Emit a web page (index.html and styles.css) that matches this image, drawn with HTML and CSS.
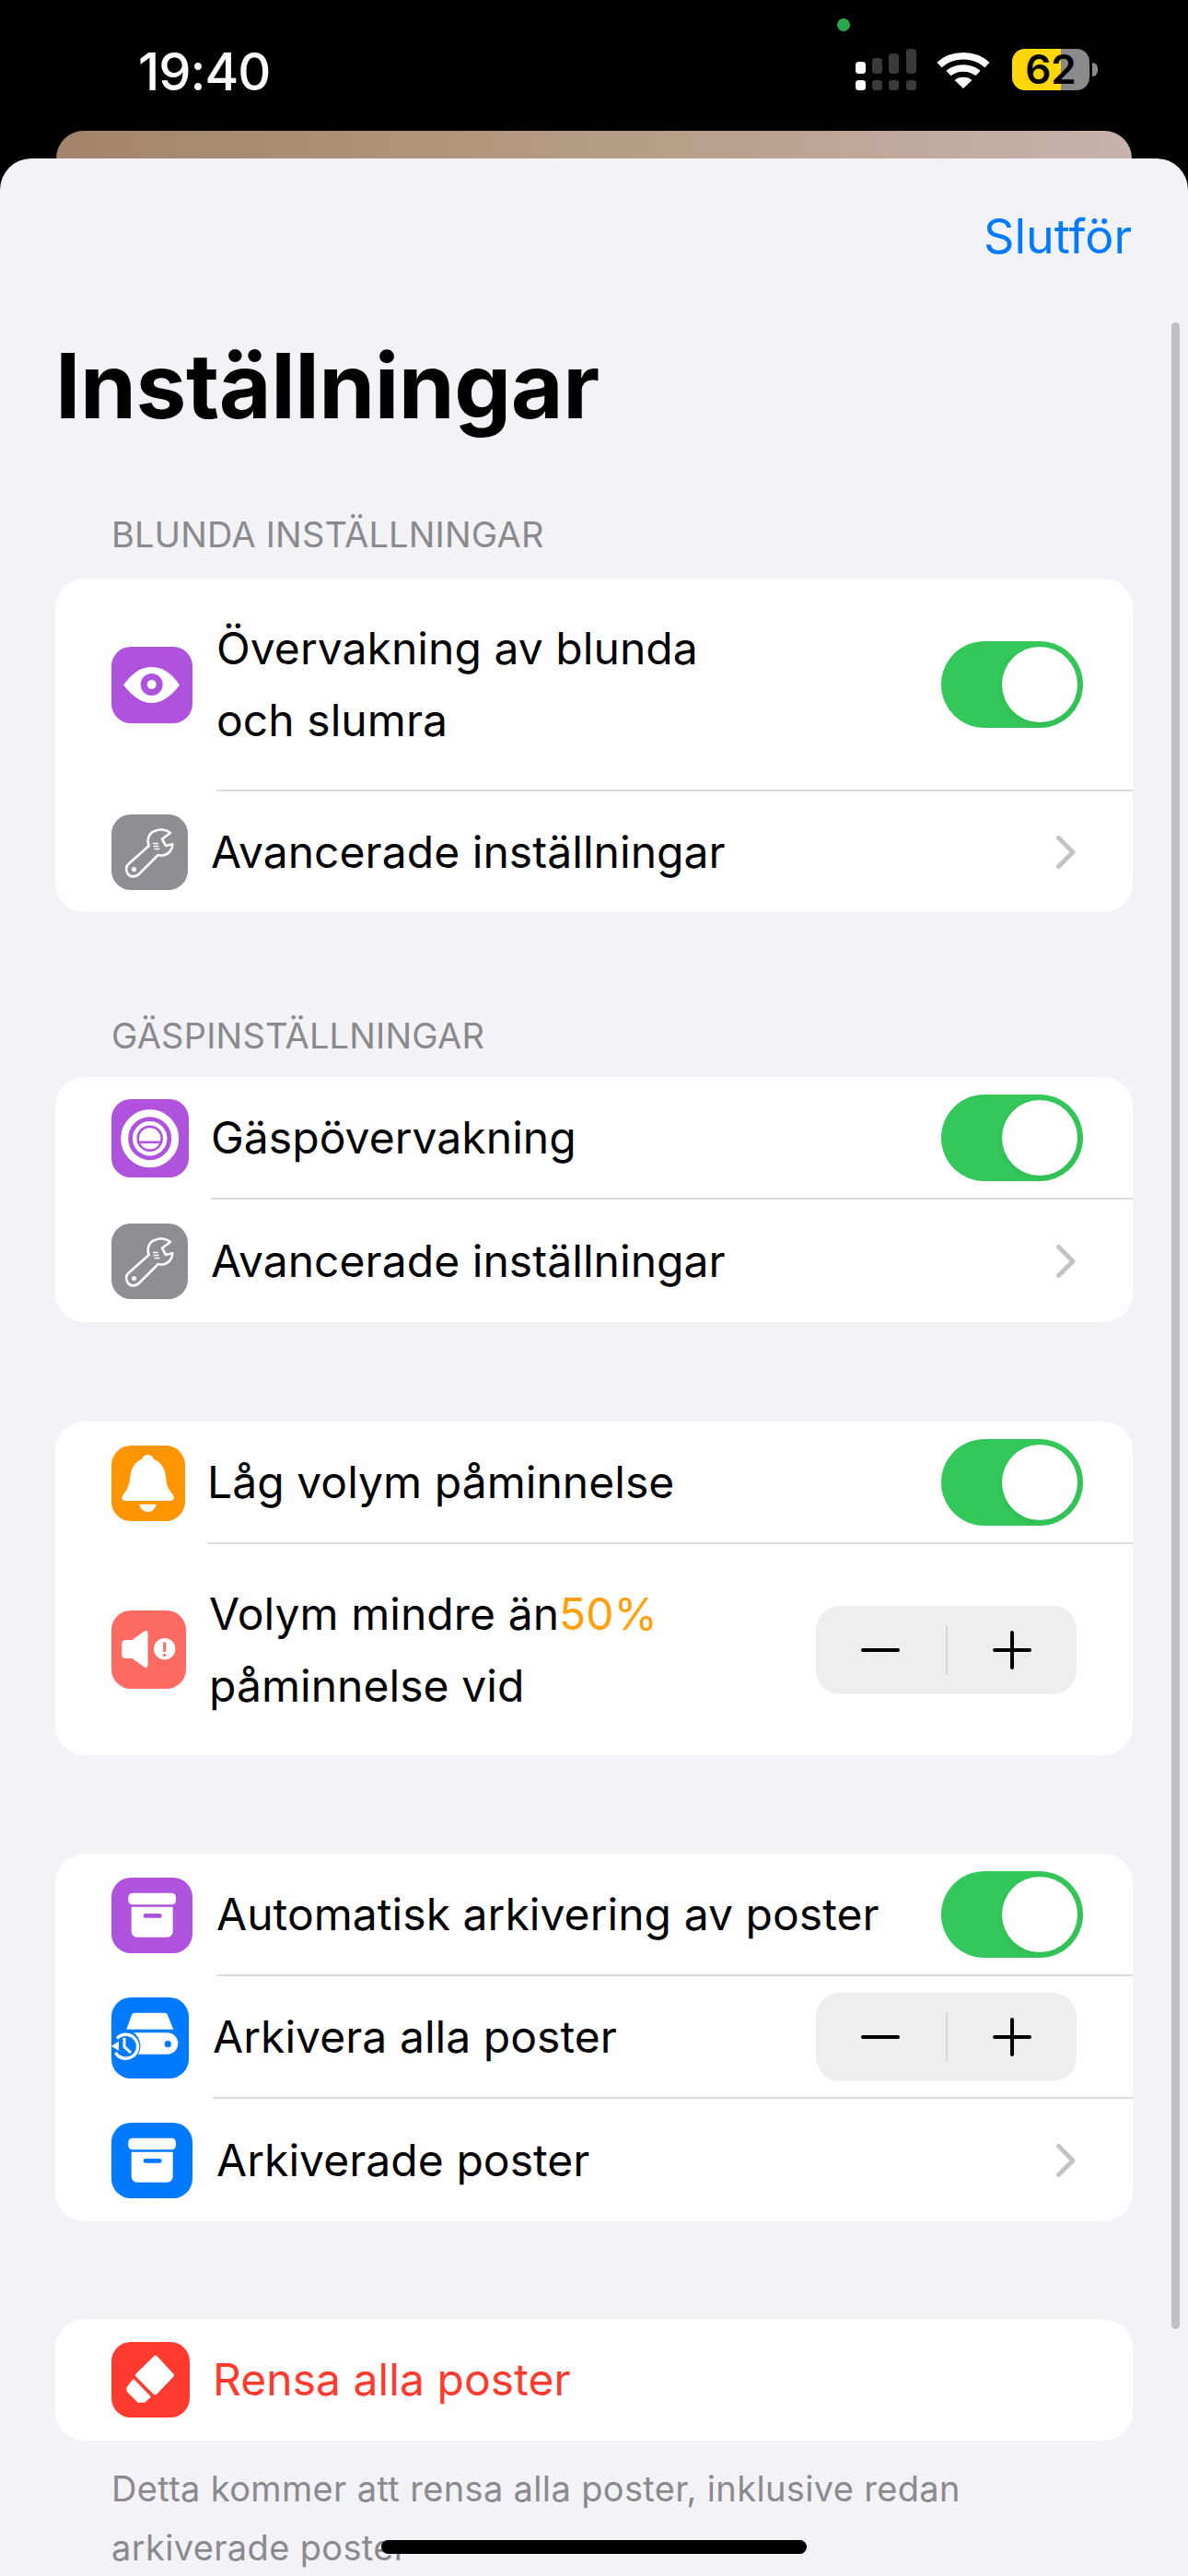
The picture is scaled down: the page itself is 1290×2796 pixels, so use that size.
FILE: index.html
```html
<!DOCTYPE html>
<html lang="sv">
<head>
  <meta charset="UTF-8">
  <title>Inställningar</title>
  <link rel="stylesheet" href="styles.css">
</head>
<body>
  <svg class="defs" width="0" height="0">
    <symbol id="wrench" viewBox="0 0 83 82">
      <path d="M18.3 54L40.7 34C38 27 41 20 47 18C52 15.5 59 16 64 20L55 26.7L59 34L66.3 32.3C66.5 37 63 43 57 44.3C55 44.8 53 44.6 50.7 44L30.7 64C26 69 20 68 17.5 64C15.5 60.5 16 56.5 18.3 54Z" fill="none" stroke="#fff" stroke-width="2.6" stroke-linejoin="round"/>
      <circle cx="24.5" cy="59.5" r="2.6" fill="#fff"/>
      <path d="M45 31.5h6M45.5 34.5h6M46.5 37.5h6" stroke="#fff" stroke-width="1.5" fill="none"/>
    </symbol>
    <symbol id="box" viewBox="0 0 88 82">
      <rect x="18.3" y="16.7" width="51.7" height="12.6" rx="4.5" fill="#fff"/>
      <path d="M21.7 31.7H66.7V58C66.7 62 64 64.7 60 64.7H28.4C24.4 64.7 21.7 62 21.7 58Z" fill="#fff"/>
      <rect x="34.7" y="39" width="20" height="4.7" rx="2.3" fill="currentColor"/>
    </symbol>
    <symbol id="chevron" viewBox="0 0 21 36">
      <path d="M2.5 2.5L18 18L2.5 33.5" fill="none" stroke="#c4c4c6" stroke-width="5" stroke-linecap="round" stroke-linejoin="round"/>
    </symbol>
  </svg>

  <div class="status">
    <span class="time">19:40</span>
    <span class="camera-dot"></span>
    <div class="status-icons">
      <svg class="signal" width="66" height="45" viewBox="0 0 66 45">
        <g fill="#3a3a3a">
          <rect x="18" y="10" width="11" height="17" rx="3.5"/>
          <rect x="36" y="5" width="11" height="22" rx="3.5"/>
          <rect x="55" y="0" width="11" height="27" rx="3.5"/>
          <rect x="18" y="34" width="11" height="11" rx="3.5"/>
          <rect x="36" y="34" width="11" height="11" rx="3.5"/>
          <rect x="55" y="34" width="11" height="11" rx="3.5"/>
        </g>
        <rect x="0" y="14" width="11" height="13" rx="3.5" fill="#fff"/>
        <rect x="0" y="34" width="11" height="11" rx="3.5" fill="#fff"/>
      </svg>
      <svg class="wifi" width="58" height="42" viewBox="0 0 58 42">
        <path d="M3 16.5C17 3.5 41 3.5 55 16.5" fill="none" stroke="#fff" stroke-width="7.5"/>
        <path d="M13 25.5C21.5 18 36.5 18 45 25.5" fill="none" stroke="#fff" stroke-width="7.5"/>
        <path d="M19.5 33C24 28.5 34 28.5 38.5 33L29 42Z" fill="#fff"/>
      </svg>
      <div class="battery"><span class="battery-level">62</span></div>
      <span class="battery-nub"></span>
    </div>
  </div>

  <div class="back-card"></div>

  <main class="sheet">
    <div class="nav"><a class="done">Slutför</a></div>
    <h1 class="title">Inställningar</h1>

    <section class="group group-first">
      <h2 class="group-label">BLUNDA INSTÄLLNINGAR</h2>
      <div class="card">
        <div class="row row-tall">
          <span class="icon purple w88 h83">
            <svg viewBox="0 0 88 83">
              <path d="M13 41.5C24 27 33 22 43.5 22C54 22 64 27 74 41.5C64 55 54 61 43.5 61C33 61 24 55 13 41.5Z" fill="#fff"/>
              <circle cx="43.7" cy="41" r="12" fill="#af52de"/>
              <circle cx="43.7" cy="41" r="5" fill="#fff"/>
            </svg>
          </span>
          <div class="row-main line">
            <span class="row-text">Övervakning av blunda<br>och slumra</span>
            <span class="toggle"><i class="knob"></i></span>
          </div>
        </div>
        <div class="row row-short">
          <span class="icon gray w83 h82"><svg viewBox="0 0 83 82"><use href="#wrench"/></svg></span>
          <div class="row-main gap-xs">
            <span class="row-text">Avancerade inställningar</span>
            <svg class="chevron"><use href="#chevron"/></svg>
          </div>
        </div>
      </div>
    </section>

    <section class="group group-second">
      <h2 class="group-label">GÄSPINSTÄLLNINGAR</h2>
      <div class="card">
        <div class="row">
          <span class="icon purple w84 h85">
            <svg viewBox="0 0 84 85">
              <circle cx="41.7" cy="42.7" r="27.5" fill="none" stroke="#fff" stroke-width="8"/>
              <circle cx="41.7" cy="42.7" r="16.5" fill="none" stroke="#fff" stroke-width="4.5"/>
              <path d="M30.3 45.5A11.7 11.7 0 1 1 53.1 45.5Z" fill="#fff"/>
              <path d="M31.3 48H52.1A11.7 11.7 0 0 1 31.3 48Z" fill="#fff"/>
            </svg>
          </span>
          <div class="row-main line gap-s">
            <span class="row-text">Gäspövervakning</span>
            <span class="toggle"><i class="knob"></i></span>
          </div>
        </div>
        <div class="row">
          <span class="icon gray w83 h82"><svg viewBox="0 0 83 82"><use href="#wrench"/></svg></span>
          <div class="row-main gap-xs">
            <span class="row-text">Avancerade inställningar</span>
            <svg class="chevron"><use href="#chevron"/></svg>
          </div>
        </div>
      </div>
    </section>

    <section class="group">
      <div class="card">
        <div class="row">
          <span class="icon orange w80 h82">
            <svg viewBox="0 0 80 82">
              <path d="M39.7 10C43 10 45.5 12.5 46 15C53 17.5 58 24 59 33C59.5 42 61 47 66.5 53C69 56 68 60 64 60L15 60C11 60 10.5 56 13 53C18 47 19.5 42 20.5 33C21.5 24 26 17.5 33 15C33.5 12.5 36 10 39.7 10Z" fill="#fff"/>
              <path d="M30.3 63.7H48.7C48 68.5 44 72 39.5 72C35 72 31 68.5 30.3 63.7Z" fill="#fff"/>
            </svg>
          </span>
          <div class="row-main line gap-s">
            <span class="row-text">Låg volym påminnelse</span>
            <span class="toggle"><i class="knob"></i></span>
          </div>
        </div>
        <div class="row row-tall-2">
          <span class="icon coral w81 h85">
            <svg viewBox="0 0 81 85">
              <path d="M11.3 36C11.3 33.5 13 32 15.3 32H22.3L35 23C37.5 21.3 39.6 22 39.6 25V59C39.6 62 37.5 62.7 35 61L22.3 52H15.3C13 52 11.3 50.5 11.3 48Z" fill="#fff"/>
              <circle cx="57.7" cy="41.7" r="11.7" fill="#fff"/>
              <rect x="56.2" y="34.2" width="3" height="11" rx="1.4" fill="#ff6a63"/>
              <circle cx="57.7" cy="48.6" r="1.7" fill="#ff6a63"/>
            </svg>
          </span>
          <div class="row-main gap-xs">
            <span class="row-text">Volym mindre än<em class="accent">50%</em><br>påminnelse vid</span>
            <div class="stepper">
              <span class="step"><svg width="42" height="42" viewBox="0 0 42 42"><path d="M2 21H40" stroke="#000" stroke-width="4" stroke-linecap="round"/></svg></span>
              <span class="step-sep"></span>
              <span class="step"><svg width="42" height="42" viewBox="0 0 42 42"><path d="M2 21H40M21 2V40" stroke="#000" stroke-width="4" stroke-linecap="round"/></svg></span>
            </div>
          </div>
        </div>
      </div>
    </section>

    <section class="group group-tight">
      <div class="card">
        <div class="row">
          <span class="icon purple w88 h82"><svg viewBox="0 0 88 82"><use href="#box"/></svg></span>
          <div class="row-main line">
            <span class="row-text">Automatisk arkivering av poster</span>
            <span class="toggle"><i class="knob"></i></span>
          </div>
        </div>
        <div class="row">
          <span class="icon blue w84 h88">
            <svg viewBox="0 0 84 88">
              <path d="M25.7 16.7H57.3C59 16.7 60.3 17.5 61 19L67.3 34.7H16.3L22 19C22.7 17.5 24 16.7 25.7 16.7Z" fill="#fff"/>
              <rect x="14" y="38.3" width="58.3" height="23.4" rx="11.7" fill="#fff"/>
              <circle cx="61.3" cy="50.7" r="3.6" fill="#007aff"/>
              <circle cx="14" cy="52.7" r="17.5" fill="#007aff"/>
              <path d="M6 44.5A13 13 0 1 1 4.5 60" fill="none" stroke="#fff" stroke-width="3.4"/>
              <path d="M0 52.7L8 47.5V58Z" fill="#fff"/>
              <path d="M14 44V53.5L21 60" fill="none" stroke="#fff" stroke-width="3"/>
            </svg>
          </span>
          <div class="row-main line">
            <span class="row-text">Arkivera alla poster</span>
            <div class="stepper">
              <span class="step"><svg width="42" height="42" viewBox="0 0 42 42"><path d="M2 21H40" stroke="#000" stroke-width="4" stroke-linecap="round"/></svg></span>
              <span class="step-sep"></span>
              <span class="step"><svg width="42" height="42" viewBox="0 0 42 42"><path d="M2 21H40M21 2V40" stroke="#000" stroke-width="4" stroke-linecap="round"/></svg></span>
            </div>
          </div>
        </div>
        <div class="row">
          <span class="icon blue w88 h82"><svg viewBox="0 0 88 82"><use href="#box"/></svg></span>
          <div class="row-main">
            <span class="row-text">Arkiverade poster</span>
            <svg class="chevron"><use href="#chevron"/></svg>
          </div>
        </div>
      </div>
    </section>

    <section class="group group-last">
      <div class="card">
        <div class="row row-clear">
          <span class="icon red w85 h82">
            <svg viewBox="0 0 85 82">
              <path d="M48 16.5L66 36L47.5 55.5L28 36Z" fill="#fff" stroke="#fff" stroke-width="4" stroke-linejoin="round"/>
              <path d="M24 41L42 59.5L36 65H29L18 54C16.5 52 17 50 18 48.5Z" fill="#fff" stroke="#fff" stroke-width="1.5" stroke-linejoin="round"/>
            </svg>
          </span>
          <div class="row-main gap-xs">
            <span class="row-text danger">Rensa alla poster</span>
          </div>
        </div>
      </div>
      <p class="group-note">Detta kommer att rensa alla poster, inklusive redan arkiverade poster</p>
    </section>

    <div class="scrollbar"></div>
    <div class="home-bar"></div>
  </main>
</body>
</html>
```

FILE: styles.css
```css
html, body {
    margin: 0;
    width: 1290px;
    height: 2796px;
    overflow: hidden;
    background: #000;
    font-family: Inter, "Liberation Sans", sans-serif;
}
.defs {
    display: block;
    height: 0;
}

/* status bar */
.status {
    position: relative;
    height: 142px;
    display: flex;
    justify-content: space-between;
    box-sizing: border-box;
    padding: 53px 98px 0 150px;
}
.time {
    color: #fff;
    font-size: 56px;
    font-weight: 500;
    line-height: 50px;
    letter-spacing: -1px;
}
.camera-dot {
    position: absolute;
    left: 909px;
    top: 20px;
    width: 14px;
    height: 14px;
    border-radius: 50%;
    background: #2ba84a;
}
.status-icons {
    display: flex;
    align-items: flex-start;
}
.signal {
    margin-right: 22px;
}
.wifi {
    margin-top: 1px;
    margin-right: 24px;
}
.battery {
    width: 84px;
    height: 45px;
    border-radius: 14px;
    background: linear-gradient(90deg, #ffd60a 0, #ffd60a 53px, #8a8a8a 53px);
    text-align: center;
}
.battery-level {
    color: #000;
    font-size: 44px;
    font-weight: 600;
    line-height: 45px;
}
.battery-nub {
    width: 6px;
    height: 15px;
    margin: 15px 0 0 3px;
    border-radius: 0 6px 6px 0;
    background: #8a8a8a;
}

.back-card {
    height: 30px;
    margin: 0 61px 0 61px;
    border-radius: 30px 30px 0 0;
    background: linear-gradient(90deg, #a1846b, #b59c84 50%, #c8b2ae);
}

/* sheet */
.sheet {
    position: relative;
    height: 2624px;
    box-sizing: border-box;
    padding: 0 60px;
    border-radius: 34px 34px 0 0;
    background: #f2f2f7;
    overflow: hidden;
}
.nav {
    display: flex;
    justify-content: flex-end;
    padding-top: 54px;
}
.done {
    color: #007aff;
    font-size: 52px;
    line-height: 62px;
    margin-right: 1px;
}
.title {
    margin: 81px 0 0 0;
    font-size: 98px;
    font-weight: 700;
    line-height: 100px;
    letter-spacing: -0.5px;
    color: #000;
}
.group {
    margin-top: 108px;
}
.group-first {
    margin-top: 87px;
}
.group-second {
    margin-top: 110px;
}
.group-tight {
    margin-top: 107px;
}
.group-last {
    margin-top: 106px;
}
.group-label {
    margin: 0 0 21px 61px;
    font-size: 38px;
    font-weight: 400;
    line-height: 48px;
    letter-spacing: 0.2px;
    color: #8a8a8e;
}
.group-first .group-label {
    margin-bottom: 24px;
}
.group-note {
    margin: 20px 60px 0 61px;
    font-size: 38px;
    line-height: 64px;
    letter-spacing: 0.35px;
    color: #8a8a8e;
}

/* rows */
.card {
    background: #fff;
    border-radius: 32px;
    overflow: hidden;
}
.row {
    display: flex;
    height: 133px;
    padding-left: 61px;
}
.row-tall {
    height: 231px;
}
.row-tall-2 {
    height: 229px;
}
.row-short {
    height: 131px;
}
.row-clear {
    height: 132px;
}
.row-main {
    flex: 1;
    min-width: 0;
    display: flex;
    align-items: center;
    justify-content: space-between;
    box-sizing: border-box;
    margin-left: 26px;
    padding-right: 54px;
}
.row-main.line {
    border-bottom: 2px solid #dcdcde;
}
.gap-xs {
    margin-left: 25px;
}
.gap-s {
    margin-left: 24px;
}
.row-text {
    font-size: 48px;
    line-height: 78px;
    letter-spacing: 0.05px;
    color: #000;
}
.accent {
    font-style: normal;
    color: #ff9f0a;
}
.danger {
    color: #ff3b30;
}

/* icons */
.icon {
    flex: none;
    align-self: center;
    display: block;
    border-radius: 21px;
    color: #fff;
    overflow: hidden;
}
.icon svg {
    display: block;
    width: 100%;
    height: 100%;
    overflow: visible;
}
.purple {
    background: #af52de;
    color: #af52de;
}
.gray {
    background: #8e8e93;
}
.orange {
    background: #ff9500;
}
.coral {
    background: #ff6a63;
}
.blue {
    background: #007aff;
    color: #007aff;
}
.red {
    background: #ff3b30;
}
.w80 { width: 80px; }
.w81 { width: 81px; }
.w83 { width: 83px; }
.w84 { width: 84px; }
.w85 { width: 85px; }
.w88 { width: 88px; }
.h82 { height: 82px; }
.h83 { height: 83px; }
.h85 { height: 85px; }
.h88 { height: 88px; }

.chevron {
    width: 21px;
    height: 36px;
    margin-right: 8px;
}

/* controls */
.toggle {
    flex: none;
    display: flex;
    justify-content: flex-end;
    align-items: center;
    box-sizing: border-box;
    width: 154px;
    height: 94px;
    padding-right: 6px;
    border-radius: 47px;
    background: #34c759;
}
.knob {
    display: block;
    width: 82px;
    height: 82px;
    border-radius: 50%;
    background: #fff;
    box-shadow: 0 3px 10px rgba(0, 0, 0, 0.06);
}
.stepper {
    flex: none;
    display: flex;
    align-items: center;
    width: 283px;
    height: 96px;
    margin-right: 7px;
    border-radius: 26px;
    background: #eeeeef;
}
.step {
    flex: 1;
    display: flex;
    justify-content: center;
}
.step svg {
    display: block;
}
.step-sep {
    width: 2px;
    height: 54px;
    background: #d8d8da;
}

/* overlays */
.scrollbar {
    position: absolute;
    left: 1272px;
    top: 178px;
    width: 9px;
    height: 2178px;
    border-radius: 5px;
    background: #c0bfc4;
}
.home-bar {
    position: absolute;
    left: 414px;
    top: 2585px;
    width: 462px;
    height: 15px;
    border-radius: 8px;
    background: #000;
}
```
